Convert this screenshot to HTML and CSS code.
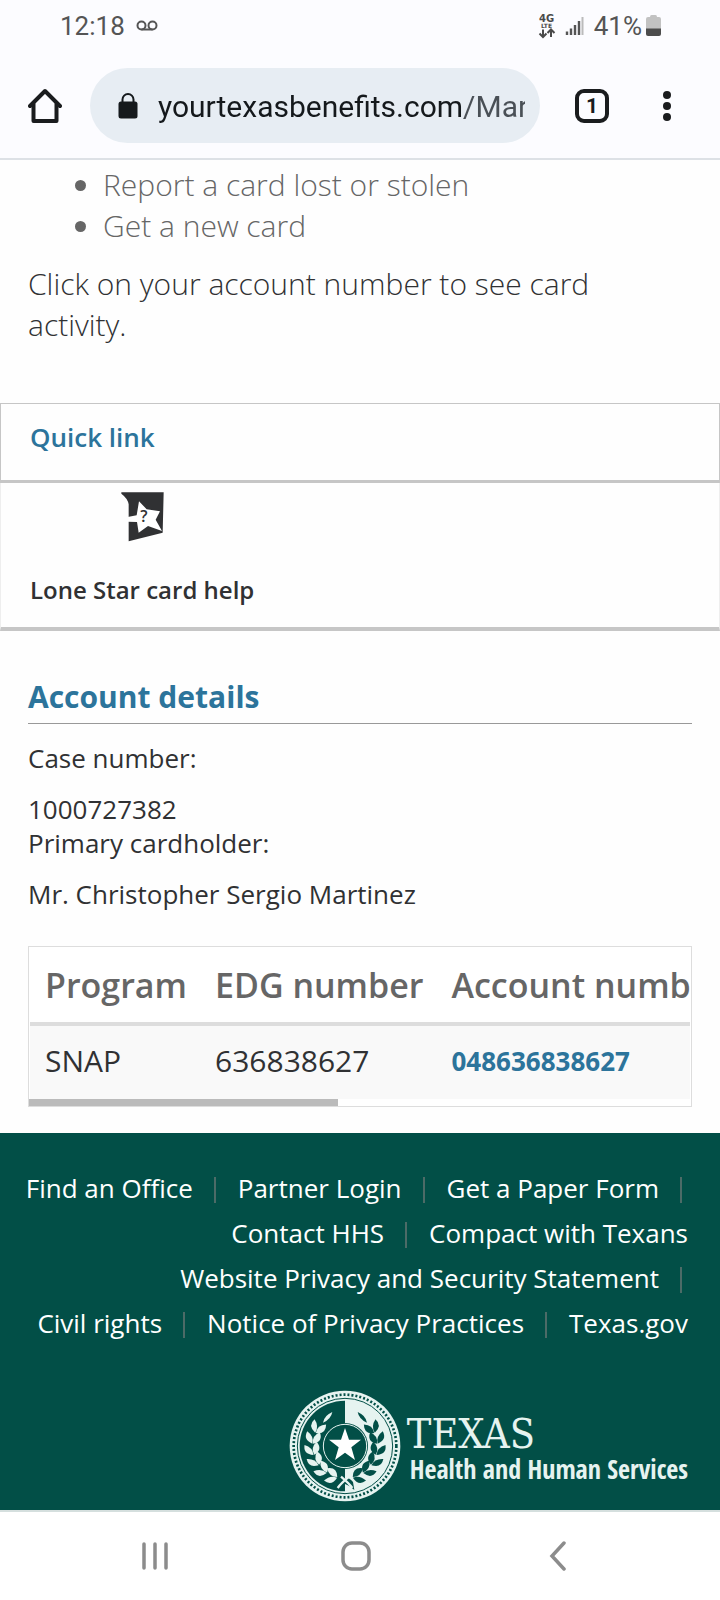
FILE: index.html
```html
<!DOCTYPE html>
<html lang="en">
<head>
<meta charset="utf-8">
<meta name="viewport" content="width=device-width">
<title>Your Texas Benefits</title>
<link rel="stylesheet" href="styles.css">
</head>
<body>
<header class="browser">
  <div class="status">
    <span class="clock">12:18</span>
    <svg class="voicemail" width="22" height="12" viewBox="0 0 22 12" fill="none" stroke="#555" stroke-width="2"><circle cx="5.5" cy="5.5" r="4"/><circle cx="16.500" cy="5.500" r="4"/><path d="M5.500 9.500H16.500"/></svg>
    <span class="spacer"></span>
    <svg class="network" width="18" height="26" viewBox="0 0 18 26"><text class="net-main" x="1" y="9">4G</text><text class="net-sub" x="3" y="15">LTE</text><path d="M5 16.500V24M1.500 20.500L5 24L8.500 20.500M13 24V16.500M9.500 20L13 16.500L16.500 20" fill="none" stroke="#4a4a4a" stroke-width="2"/></svg>
    <svg class="signal" width="20" height="20" viewBox="0 0 20 20"><path d="M2 15.500V19M6 12.500V19M10 9V19M14 5V19" stroke="#555" stroke-width="2.400"/><path d="M17.500 1V19" stroke="#bbb" stroke-width="2"/></svg>
    <span class="battery-level">41%</span>
    <svg class="battery" width="15" height="22" viewBox="0 0 15 22"><path d="M4 2Q4 0 5.500 0H9.500Q11 0 11 2H13Q15 2 15 4V14H0V4Q0 2 2 2Z" fill="#c2c2c2"/><path d="M0 13.500H15V19Q15 21 13 21H2Q0 21 0 19Z" fill="#4c4c4c"/></svg>
  </div>
  <div class="toolbar">
    <button class="icon-button" aria-label="Home"><svg width="34" height="36" viewBox="0 0 34 36" fill="none" stroke="#1a1c1e" stroke-width="4" stroke-linejoin="round" stroke-linecap="round"><path d="M2 18L17 3L32 18"/><path d="M5.500 16V33H28.500V16"/></svg></button>
    <label class="address">
      <svg width="20" height="26" viewBox="0 0 20 26"><path d="M4.500 10V6.500a5.500 5.500 0 0 1 11 0V10" fill="none" stroke="#15191c" stroke-width="2"/><rect x="0.500" y="8.500" width="19" height="17" rx="2.500" fill="#15191c"/></svg>
      <input class="url" type="text" aria-label="Address" value="yourtexasbenefits.com/Mar">
    </label>
    <button class="tabs" aria-label="Open tabs">1</button>
    <button class="icon-button" aria-label="Menu"><svg width="8" height="32" viewBox="0 0 8 32" fill="#1a1c1e"><circle cx="4" cy="5" r="4"/><circle cx="4" cy="16" r="4"/><circle cx="4" cy="27" r="4"/></svg></button>
  </div>
</header>

<main>
  <section class="intro">
    <ul class="actions">
      <li>Report a card lost or stolen</li>
      <li>Get a new card</li>
    </ul>
    <p class="hint">Click on your account number to see card activity.</p>
  </section>

  <section class="quick">
    <h2 class="quick-title">Quick link</h2>
    <a class="quick-item" href="#help">
      <svg class="card-icon" width="43" height="50" viewBox="64 35 129 150"><path d="M65 36H192L189 157L87 183V72Q84 54 65 40Z" fill="#303133"/><path d="M84 110L111 105L118 63L141 87L181 93L168 118L187 152L145 137L117 157L112 125L84 124Z" fill="#fff"/><text class="card-mark" x="122" y="126">?</text></svg>
      <span>Lone Star card help</span>
    </a>
  </section>

  <section class="account">
    <h2 class="account-title">Account details</h2>
    <dl class="facts">
      <dt>Case number:</dt>
      <dd>1000727382</dd>
      <dt>Primary cardholder:</dt>
      <dd>Mr. Christopher Sergio Martinez</dd>
    </dl>
    <div class="table-box">
      <div class="table-clip">
        <table class="programs">
          <thead><tr><th scope="col">Program</th><th scope="col">EDG number</th><th scope="col">Account number</th></tr></thead>
          <tbody><tr><td>SNAP</td><td>636838627</td><td><a href="#account">048636838627</a></td></tr></tbody>
        </table>
      </div>
      <div class="thumb"></div>
    </div>
  </section>
</main>

<footer class="footer">
  <nav class="links" aria-label="Footer">
    <div class="row open"><a href="#office">Find an Office</a><a href="#partner">Partner Login</a><a href="#form">Get a Paper Form</a></div>
    <div class="row"><a href="#contact">Contact HHS</a><a href="#compact">Compact with Texans</a></div>
    <div class="row open"><a href="#privacy">Website Privacy and Security Statement</a></div>
    <div class="row"><a href="#rights">Civil rights</a><a href="#practices">Notice of Privacy Practices</a><a href="#texas">Texas.gov</a></div>
  </nav>
  <div class="brand">
    <svg class="seal" width="112" height="112" viewBox="29 30 336 336">
      <defs>
        <g id="pair"><path d="M98 0Q94 22 116 36Q128 10 98 0Z"/><path d="M96 0Q66 8 78 36Q102 24 96 0Z"/></g>
        <g id="branch">
          <use href="#pair" transform="rotate(104)"/><use href="#pair" transform="rotate(124)"/><use href="#pair" transform="rotate(144)"/><use href="#pair" transform="rotate(164)"/><use href="#pair" transform="rotate(184)"/><use href="#pair" transform="rotate(204)"/>
          <path d="M-66 -70Q-62 -92 -38 -102Q-42 -80 -66 -70Z"/>
        </g>
      </defs>
      <g transform="translate(197 198)">
        <circle r="166" fill="#e6f3f0"/>
        <circle r="154" fill="none" stroke="#024f47" stroke-width="8" stroke-dasharray="6 6"/>
        <circle r="143" fill="none" stroke="#024f47" stroke-width="3"/>
        <path d="M0 -136A136 136 0 0 0 0 136Z" fill="#024f47"/>
        <use href="#branch" fill="#e6f3f0"/>
        <use href="#branch" fill="#024f47" transform="scale(-1 1)"/>
        <path d="M-30 132Q-22 110 0 98Q10 92 24 108L28 132Q14 118 0 114Q-14 120 -30 132Z" fill="#024f47"/>
        <path d="M-22 126Q-12 112 12 92M22 126Q12 112 -12 92" fill="none" stroke="#e6f3f0" stroke-width="7"/>
        <circle r="69" fill="#024f47"/>
        <circle r="65" fill="none" stroke="#e6f3f0" stroke-width="3"/>
        <path d="M0 -54L12 -19L48 -19L19 4L30 42L0 20L-30 42L-19 4L-48 -19L-12 -19Z" fill="#fff"/>
      </g>
    </svg>
    <div class="brand-text"><span class="brand-state">TEXAS</span><span class="brand-agency">Health and Human Services</span></div>
  </div>
</footer>

<nav class="system" aria-label="System">
  <button class="system-button" aria-label="Recent apps"><svg width="28" height="28" viewBox="0 0 28 28" stroke="#8c8c8c" stroke-width="3.500" stroke-linecap="round"><path d="M3 2V26M14 2V26M25 2V26"/></svg></button>
  <button class="system-button" aria-label="Home"><svg width="30" height="30" viewBox="0 0 30 30" fill="none" stroke="#8c8c8c" stroke-width="3.500"><rect x="2" y="2" width="26" height="26" rx="9"/></svg></button>
  <button class="system-button" aria-label="Back"><svg width="18" height="30" viewBox="0 0 18 30" fill="none" stroke="#8c8c8c" stroke-width="3.500" stroke-linecap="round"><path d="M15 2L3 15L15 28"/></svg></button>
</nav>
</body>
</html>
```

FILE: styles.css
```css
* { box-sizing: border-box; }
body {
  margin: 0;
  background: #fefefe;
  color: #303133;
  font-family: "Open Sans", "Noto Sans", sans-serif;
  font-size: 26px;
  line-height: 34px;
}
h2, p, ul, dl, dd { margin: 0; padding: 0; }
a { color: inherit; text-decoration: none; }
button { border: 0; padding: 0; background: none; color: inherit; }
svg { display: block; flex: none; }

/* Browser chrome */
.browser { background: #fcfcff; border-bottom: 2px solid #dde1e6; font-family: Roboto, sans-serif; }
.status { display: flex; align-items: center; height: 52px; padding: 0 59px 0 60px; color: #555; }
.voicemail { margin-left: 11px; }
.spacer { flex: 1; }
.signal { margin: 0 9px; }
.net-main { font: bold 10px "DejaVu Sans", sans-serif; fill: #4a4a4a; }
.net-sub { font: bold 6px "DejaVu Sans", sans-serif; fill: #4a4a4a; }
.battery { margin-left: 4px; }
.toolbar { display: flex; align-items: center; padding: 16px 49px 15px 28px; }
.address { flex: 1; display: flex; align-items: center; min-width: 0; height: 75px; margin: 0 35px 0 28px; padding: 0 15px 0 28px; border-radius: 38px; background: #e7edf3; }
.url { flex: 1; min-width: 0; margin-left: 20px; padding: 2px 0 0; border: 0; font: 30px/40px Roboto, sans-serif; color: transparent; background: linear-gradient(90deg, #15191c 306px, #4a5056 306px); background-clip: text; -webkit-background-clip: text; }
.tabs { width: 34px; height: 34px; margin-right: 54px; border: 4px solid #1a1c1e; border-radius: 9px; font: bold 21px/26px Roboto, sans-serif; color: #1a1c1e; }

/* Introduction */
.intro { padding: 4px 28px 58px; font-size: 30px; font-weight: 300; line-height: 41px; }
.actions { padding-left: 75px; color: #666; }
.hint { margin-top: 17px; }

/* Quick link */
.quick-title { height: 80px; padding: 16px 29px 0; border: 1px solid #c6c6c6; border-bottom-width: 3px; font-size: 26px; font-weight: 600; line-height: 34px; color: #2c749b; }
.quick-item { display: block; padding: 9px 29px 20px; border: 1px solid #eee; border-top: 0; border-bottom: 4px solid #c6c6c6; font-size: 24px; font-weight: 600; }
.quick-item span { display: block; margin-top: 31px; }
.card-icon { margin-left: 91px; }
.card-mark { font: 600 48px "Open Sans", sans-serif; fill: #303133; }

/* Account */
.account { padding: 45px 28px 26px; }
.account-title { padding-bottom: 6px; border-bottom: 1px solid #999; font-size: 30px; line-height: 41px; color: #2c749b; }
.facts { padding-top: 17px; }
.facts dd { margin-top: 17px; }
.table-box { margin-top: 35px; border: 1px solid #ddd; background: #fff; }
.table-clip { margin: 0 1px; overflow: hidden; }
.programs { border-collapse: collapse; white-space: nowrap; }
.programs th { height: 77px; padding: 0 13px 0 15px; border-bottom: 4px solid #ddd; font-size: 34px; font-weight: 600; line-height: 46px; text-align: left; color: #666; }
.programs td { height: 75px; padding: 0 13px 4px 15px; background: #f9f9f9; font-size: 30px; line-height: 41px; }
.programs td a { font-size: 26px; font-weight: 700; color: #2c749b; }
.thumb { width: 46.7%; height: 7px; background: #bbb; }

/* Footer */
.footer { padding: 34px 32px 8px 22px; border-bottom: 2px solid #d5dfde; background: #024f47; color: #fff; }
.row { display: flex; justify-content: flex-end; align-items: center; height: 45px; white-space: nowrap; }
.row a { padding-bottom: 4px; line-height: 22px; }
.row a:not(:last-child), .open a:last-child { padding-right: 21px; border-right: 2px solid #4c6b67; }
.row a + a { margin-left: 22px; }
.open { padding-right: 6px; }
.brand { display: flex; justify-content: flex-end; align-items: center; margin-top: 43px; }
.brand-text { margin: 6px 0 0 6px; color: #e6f3f0; }
.brand-text span { display: block; white-space: nowrap; }
.brand-state { font: 41px/40px "DejaVu Serif Condensed", "DejaVu Serif", serif; }
.brand-agency { padding-left: 3px; font: bold 26px/30px "Open Sans Condensed", Lato, sans-serif; }

/* System navigation */
.system { display: grid; grid-template-columns: repeat(3, 1fr); height: 88px; padding: 0 61px 0 54px; background: #fff; }
.system-button { display: flex; align-items: center; justify-content: center; }
```
